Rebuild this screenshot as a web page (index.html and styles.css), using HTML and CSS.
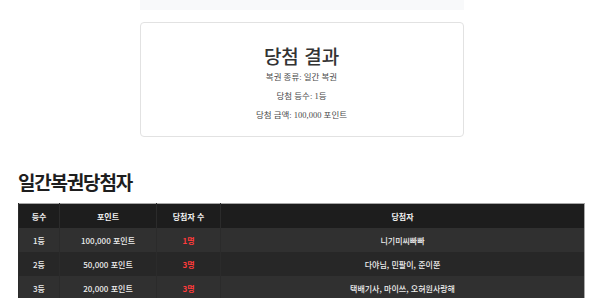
FILE: index.html
```html
<!DOCTYPE html>
<html lang="ko">
<head>
  <meta charset="UTF-8">
  <meta name="viewport" content="width=device-width, initial-scale=1.0">
  <title>일간복권 당첨 결과</title>
  <link rel="stylesheet" href="styles.css">
</head>
<body>

<div class="page">
  <div class="draw-box"></div>

  <div class="result-card">
    <h2>당첨 결과</h2>
    <p>복권 종류: 일간 복권</p>
    <p>당첨 등수: 1등</p>
    <p>당첨 금액: 100,000 포인트</p>
  </div>

  <h3 class="section-title">일간복권당첨자</h3>

  <table class="winners">
    <thead>
      <tr>
        <th class="col-rank">등수</th>
        <th class="col-point">포인트</th>
        <th class="col-count">당첨자 수</th>
        <th>당첨자</th>
      </tr>
    </thead>
    <tbody>
      <tr>
        <td>1등</td>
        <td>100,000 포인트</td>
        <td class="count">1명</td>
        <td>니기미씨빠빠</td>
      </tr>
      <tr>
        <td>2등</td>
        <td>50,000 포인트</td>
        <td class="count">3명</td>
        <td>다야님, 민팔이, 준이쭌</td>
      </tr>
      <tr>
        <td>3등</td>
        <td>20,000 포인트</td>
        <td class="count">3명</td>
        <td>택배기사, 마이쓰, 오혀원사랑해</td>
      </tr>
    </tbody>
  </table>
</div>

</body>
</html>
```

FILE: styles.css
```css
body {
  margin: 0;
  font-family: "Noto Sans CJK KR", "Noto Sans", sans-serif;
  background: #fff;
  color: #222;
}

.page {
  padding: 0 15px 0 18px;
}

.draw-box {
  width: 324px;
  height: 10px;
  margin: 0 auto;
  background: #f8f9fa;
}

.result-card {
  width: 322px;
  height: 113px;
  margin: 12px auto 0;
  border: 1px solid #e2e2e2;
  border-radius: 4px;
  text-align: center;
  box-sizing: content-box;
}

.result-card h2 {
  margin: 21px 0 0;
  font-size: 19px;
  font-weight: 500;
  line-height: 24px;
  color: #333;
}

.result-card p {
  margin: 0;
  font-family: "Liberation Serif", "Noto Sans CJK KR", serif;
  font-size: 8.5px;
  line-height: 19px;
  color: #4a4a4a;
}

.section-title {
  margin: 33px 0 0;
  font-size: 19px;
  font-weight: 700;
  line-height: 24px;
  letter-spacing: -1.2px;
  color: #1e1e1e;
}

.winners {
  width: 100%;
  margin-top: 9px;
  border-collapse: collapse;
  border: 1px solid #a8a8a8;
  font-size: 8px;
  color: #eee;
  text-align: center;
}

.winners th,
.winners td {
  height: 24px;
  padding: 0;
  border-left: 1px solid #2b2b2b;
}

.winners th {
  background: #1d1d1d;
  font-weight: 700;
  color: #f2f2f2;
}

.winners td {
  font-weight: 500;
}

.winners tbody tr:nth-child(odd) td {
  background: #303030;
}

.winners tbody tr:nth-child(even) td {
  background: #272727;
}

.col-rank { width: 40px; }
.col-point { width: 96px; }
.col-count { width: 63px; }

.winners td.count {
  color: #ff3b3b;
  font-weight: 700;
}
```
